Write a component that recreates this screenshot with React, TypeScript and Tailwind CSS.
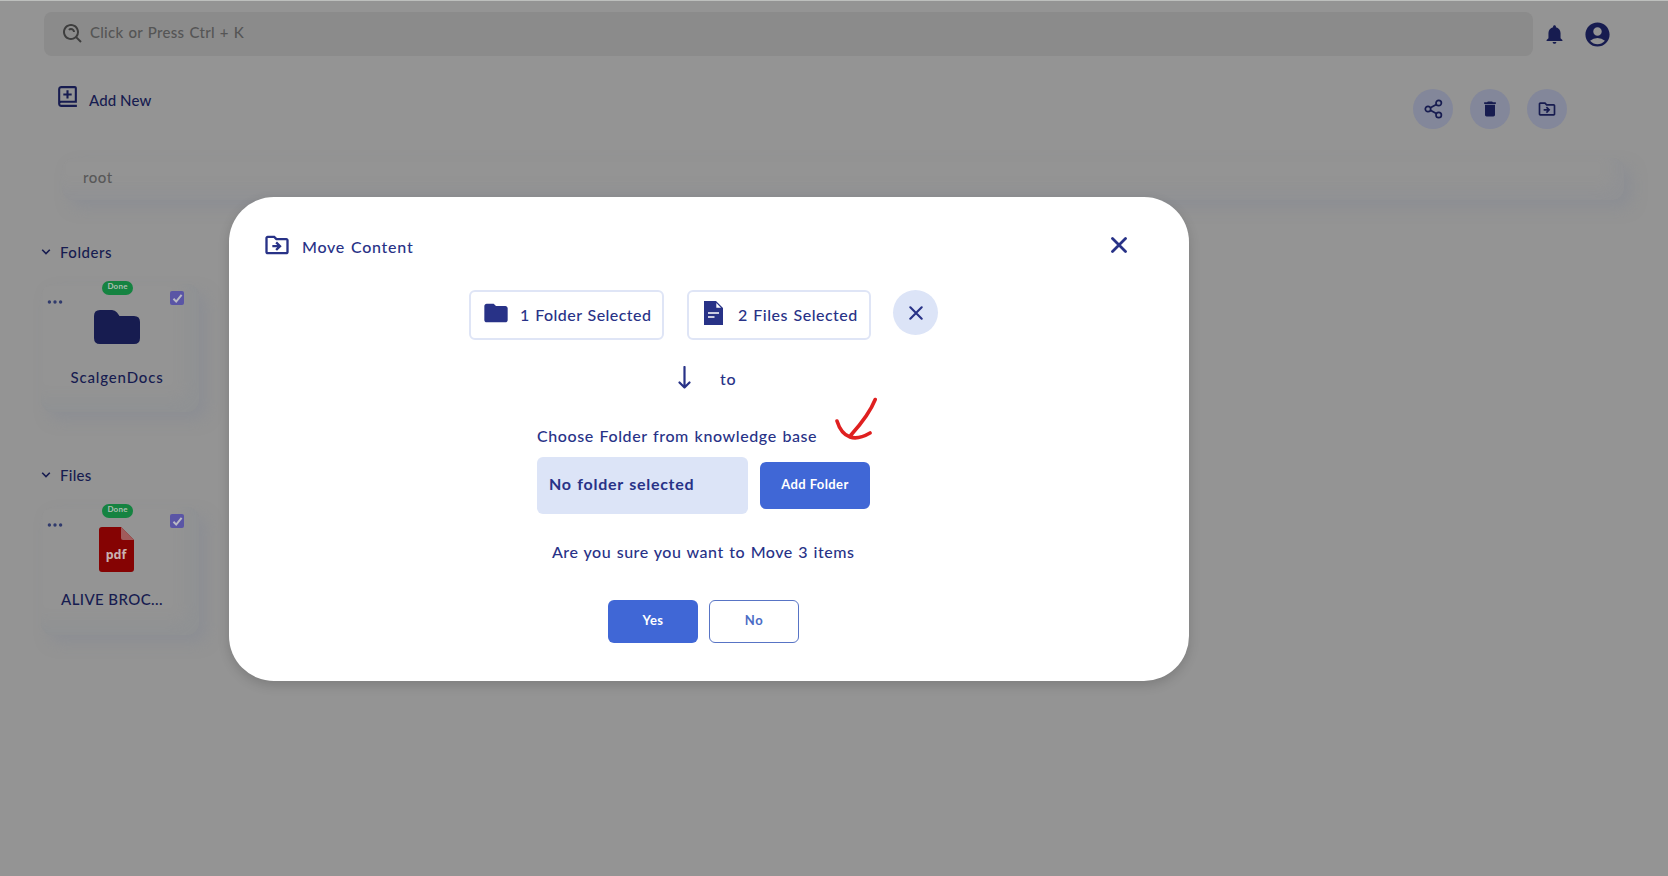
import { BiBookAdd, BiSearchAlt } from "react-icons/bi";
import { BsThreeDots } from "react-icons/bs";
import { IoMdNotifications } from "react-icons/io";
import { MdAccountCircle, MdDelete, MdFolder, MdOutlineDriveFileMove } from "react-icons/md";
import type { ReactNode } from "react";

function Chevron() {
  return (
    <svg width="10" height="8" viewBox="0 0 10 8" fill="none" stroke="#171c50" strokeWidth="1.6">
      <path d="M1.2 1.8 5 5.6 8.8 1.8" />
    </svg>
  );
}

function Cross({ className }: { className: string }) {
  return (
    <svg viewBox="0 0 16 16" className={className} fill="none" stroke="currentColor" strokeLinecap="round">
      <path d="M1.5 1.5 14.5 14.5M14.5 1.5 1.5 14.5" />
    </svg>
  );
}

function ShareIcon() {
  return (
    <svg width="19" height="20" viewBox="0 0 19 20" fill="none" stroke="currentColor" strokeWidth="1.7">
      <circle cx="4" cy="10" r="2.7" />
      <circle cx="14.7" cy="4" r="2.7" />
      <circle cx="14.7" cy="16" r="2.7" />
      <path d="M6.4 8.7 12.3 5.4M6.4 11.3 12.3 14.6" />
    </svg>
  );
}

function RoundAction({ children }: { children: ReactNode }) {
  return (
    <button className="flex size-10 items-center justify-center rounded-full bg-[#83879a] text-[#171c50]">
      {children}
    </button>
  );
}

function ItemCard({ name, nameClass, children }: { name: string; nameClass: string; children: ReactNode }) {
  return (
    <div className="relative h-[128px] w-[158px] rounded-xl bg-[#949494] shadow-[8px_8px_14px_rgba(133,138,148,0.5),inset_-12px_-12px_14px_rgba(133,138,148,0.25)]">
      <div className="flex h-full w-[152px] flex-col items-center">
        <div className="flex h-[46px] w-full shrink-0 items-end justify-center">{children}</div>
        <span className={nameClass}>{name}</span>
      </div>
      <span className="absolute -top-[3px] left-[61px] flex h-[14px] w-[31px] justify-center rounded-full bg-[#158341] text-[8px] leading-[10px] tracking-[0.2px] font-bold text-[#aebfb3]">
        Done
      </span>
      <BsThreeDots className="absolute top-[9px] left-[5px] size-[18px] text-[#303a6c]" />
      <span className="absolute top-[7px] left-[129px] flex size-[14px] items-center justify-center rounded-[2px] bg-[#5a55a5]">
        <svg width="11" height="11" viewBox="0 0 11 11" fill="none" stroke="#b9b9c4" strokeWidth="2">
          <path d="M1.5 5.8 4.2 8.6 9.6 1.8" />
        </svg>
      </span>
    </div>
  );
}

function Page() {
  return (
    <div className="flex h-full flex-col border-t border-[#bdbfbd] pt-[11px]">
      <header className="flex h-11 items-center">
        <div className="ml-11 flex h-11 w-[1489px] items-center rounded-lg bg-[#8b8b8b] pl-[17px]">
          <BiSearchAlt className="size-6 text-[#3e3e3e]" />
          <span className="-mt-[4px] ml-[5px] text-[15px] tracking-[0.27px] font-medium text-[#555] [word-spacing:1px]">Click or Press Ctrl + K</span>
        </div>
        <IoMdNotifications className="ml-[10px] size-[23px] text-[#171c50]" />
        <MdAccountCircle className="ml-[17px] size-[29px] text-[#171c50]" />
      </header>
      <div className="flex h-[102px] justify-between pr-[101px] pl-[55px]">
        <div className="flex pt-[28px] text-[#171c50]">
          <BiBookAdd className="size-[25px]" />
          <span className="ml-[9px] pt-[5px] text-[15px] tracking-[0.1px] leading-[22px] font-medium">Add New</span>
        </div>
        <div className="flex gap-[17px] pt-[33px]">
          <RoundAction><ShareIcon /></RoundAction>
          <RoundAction><MdDelete className="size-5" /></RoundAction>
          <RoundAction><MdOutlineDriveFileMove className="size-5" /></RoundAction>
        </div>
      </div>
      <div className="mr-[44px] ml-[62px] flex h-[42px] items-center rounded-xl bg-[#949494] pl-[21px] text-[15px] tracking-[0.5px] text-[#585858] shadow-[8px_8px_14px_rgba(133,138,148,0.5),inset_-10px_-10px_14px_rgba(133,138,148,0.22)]">
        <span className="-mt-[4px] font-medium">root</span>
      </div>
      <section className="mt-[40px] pl-[41px]">
        <h2 className="flex h-6 items-center gap-[9px] text-[15px] tracking-[0.55px] font-medium text-[#171c50]">
          <Chevron />Folders
        </h2>
        <div className="mt-[20px]">
          <ItemCard name="ScalgenDocs" nameClass="mt-[35px] text-[15px] leading-6 tracking-[0.85px] font-medium text-[#171c50]">
            <svg width="46" height="34" viewBox="0 0 46 34" className="translate-y-[14px]" fill="#171c50">
              <path d="M6 0H18Q21 0 23 2.5L25.5 6H40Q46 6 46 12V28Q46 34 40 34H6Q0 34 0 28V6Q0 0 6 0Z" />
            </svg>
          </ItemCard>
        </div>
      </section>
      <section className="mt-[51px] pl-[41px]">
        <h2 className="flex h-6 items-center gap-[9px] text-[15px] tracking-[0.3px] font-medium text-[#171c50]">
          <Chevron />Files
        </h2>
        <div className="mt-[20px]">
          <ItemCard name="ALIVE BROC..." nameClass="mt-[34px] mr-[10px] text-[15px] leading-6 tracking-[0.4px] font-medium text-[#171c50] whitespace-nowrap">
            <svg width="35" height="45" viewBox="0 0 35 45" className="mr-px translate-y-[19px]">
              <path d="M3 0H22L35 13V42Q35 45 32 45H3Q0 45 0 42V3Q0 0 3 0Z" fill="#850303" />
              <path d="M22 0 35 13H24Q22 13 22 11Z" fill="#a15b5b" />
              <text x="17" y="32" textAnchor="middle" fill="#c9b1b1" fontSize="12.5" fontWeight="700" fontFamily="Noto Sans">pdf</text>
            </svg>
          </ItemCard>
        </div>
      </section>
    </div>
  );
}

function MoveDialog() {
  return (
    <div role="dialog" className="absolute top-[197px] left-[229px] flex h-[484px] w-[960px] flex-col rounded-[45px] bg-white text-[16px] font-medium text-[#283287] shadow-[0_4px_12px_rgba(0,0,0,0.16)] [word-spacing:1px]">
      <div className="flex h-[93px] shrink-0 items-start pt-[34px] pl-[34px]">
        <MdOutlineDriveFileMove className="size-7" />
        <h1 className="ml-[11px] w-[112px] pt-[4px] leading-6 tracking-[0.75px] whitespace-nowrap">Move Content</h1>
        <Cross className="mt-[6px] ml-[697px] size-4 stroke-[2.8]" />
      </div>
      <div className="flex items-start pl-[240px]">
        <div className="flex h-[50px] w-[195px] items-center rounded-md border-2 border-[#dfe5f6] pl-[11px]">
          <MdFolder className="-mt-[4px] size-7" />
          <span className="-mt-px ml-[10px] whitespace-nowrap tracking-[0.44px]">1 Folder Selected</span>
        </div>
        <div className="ml-[23px] flex h-[50px] w-[184px] items-center rounded-md border-2 border-[#dfe5f6] pl-[15px]">
          <svg width="19" height="24" viewBox="0 0 19 24" className="-mt-[4px]">
            <path d="M0 0H12L19 7V24H0Z" fill="currentColor" />
            <path d="M12.3 2V6.7H17Z" fill="white" />
            <path d="M4 12H15M4 16H10.5" stroke="white" strokeWidth="1.5" />
          </svg>
          <span className="-mt-px ml-[15px] whitespace-nowrap tracking-[0.5px]">2 Files Selected</span>
        </div>
        <button className="ml-[22px] flex size-[45px] items-center justify-center rounded-full bg-[#dce4f7]">
          <Cross className="size-[14px] stroke-[2.4]" />
        </button>
      </div>
      <div className="mt-[26px] flex h-6 items-center pl-[449px]">
        <svg width="13" height="23" viewBox="0 0 13 23" className="-mt-px" fill="none" stroke="currentColor" strokeWidth="2.2" strokeLinecap="round" strokeLinejoin="round">
          <path d="M6.5 1V21.5M1.5 16.5 6.5 21.5 11.5 16.5" />
        </svg>
        <span className="mt-[2px] ml-[29px] tracking-[0.8px]">to</span>
      </div>
      <div className="mt-[34px] flex h-6 pl-[308px]">
        <span className="w-[300px] whitespace-nowrap leading-6 tracking-[0.6px]">Choose Folder from knowledge base</span>
        <svg width="42" height="44" viewBox="0 0 42 44" className="-mt-[27px] -ml-[2px] shrink-0" fill="none" stroke="#df2020" strokeWidth="3.6" strokeLinecap="round" strokeLinejoin="round">
          <path d="M40.2 2.5Q34 18 16 38M2 24Q6 37 15 40 23 43 35 36" />
        </svg>
      </div>
      <div className="mt-[9px] flex items-center pl-[308px]">
        <div className="flex h-[57px] w-[211px] items-center rounded-md bg-[#dce4f7] pb-[3px] pl-[12px] font-bold tracking-[0.72px]">No folder selected</div>
        <button className="ml-[12px] flex h-[47px] w-[110px] items-center justify-center rounded-md bg-[#4067d6] pb-[2px] text-[13px] tracking-[0.4px] font-bold whitespace-nowrap text-white">Add Folder</button>
      </div>
      <p className="mt-[26px] pl-[323px] leading-6 tracking-[0.5px]">Are you sure you want to Move 3 items</p>
      <div className="mt-[36px] flex gap-[11px] pl-[379px] text-[13px] tracking-[0.5px] font-bold">
        <button className="h-[43px] w-[90px] rounded-md bg-[#4067d6] pb-[2px] text-white">Yes</button>
        <button className="h-[43px] w-[90px] rounded-md border border-[#5874c5] pb-[2px] text-[#4b6cc5]">No</button>
      </div>
    </div>
  );
}

export default function App() {
  return (
    <main className="relative h-[876px] w-[1668px] overflow-hidden bg-[#949494] font-['Lato','Noto_Sans',sans-serif]">
      <Page />
      <MoveDialog />
    </main>
  );
}
